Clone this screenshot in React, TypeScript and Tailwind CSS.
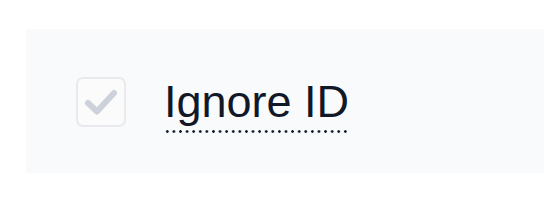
export default function App() {
  return (
    <div className="w-[544px] h-[200px] bg-white pt-[29px] pl-[26px] overflow-hidden">
      <div className="h-[144px] bg-[#f9fafb] flex items-center pl-[50px] gap-[38px]">
        <div className="w-[50px] h-[50px] mt-[2px] rounded-[7px] border-2 border-[#e8eaee] bg-[#fbfbfc] flex items-center justify-center">
          <svg width="36" height="36" viewBox="0 0 36 36" fill="none">
            <path
              d="M5 19 L14 27.5 L31 9"
              stroke="#cdd2da"
              strokeWidth="6"
              strokeLinecap="round"
              strokeLinejoin="round"
            />
          </svg>
        </div>
        <div className="relative mt-[2px]">
          <span
            className="text-[45px] leading-[52px] text-[#111827]"
            style={{ fontFamily: '"Liberation Sans", Arial, sans-serif' }}
          >
            Ignore ID
          </span>
          <div className="absolute left-0 right-0 bottom-[-5px] h-[3px] bg-[radial-gradient(circle,#111827_1px,transparent_1.6px)] bg-[length:6.6px_3px] bg-repeat-x" />
        </div>
      </div>
    </div>
  );
}
